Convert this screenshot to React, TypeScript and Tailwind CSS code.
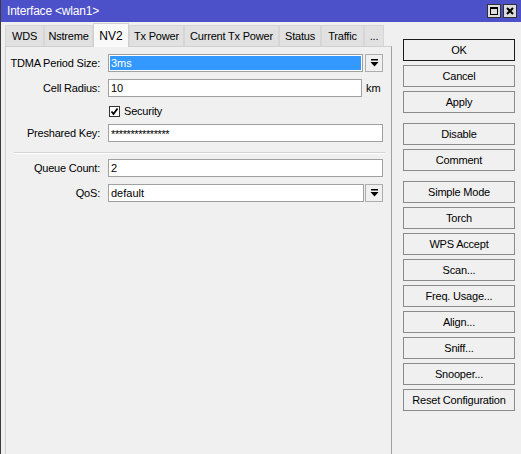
import React from "react";

const font = { fontFamily: '"Liberation Sans", Arial, sans-serif' };

function DropBtn() {
  return (
    <div className="w-[18px] h-[18px] border border-[#adadad] bg-[#f0f0f0] flex items-center justify-center shrink-0">
      <svg width="9" height="8" viewBox="0 0 9 8">
        <rect x="1" y="0" width="7" height="1.5" fill="#000" />
        <polygon points="0.5,3 8.5,3 4.5,7.5" fill="#000" />
      </svg>
    </div>
  );
}

function Label({ children }: { children: React.ReactNode }) {
  return (
    <div className="w-[95px] text-right pr-[1px] text-[11px] text-black shrink-0 tracking-[-0.2px]">{children}</div>
  );
}

function Input({ children, w }: { children?: React.ReactNode; w: string }) {
  return (
    <div className={`${w} h-[18px] border border-[#a0a0a0] bg-white flex items-center px-[2px] text-[11px] shrink-0`}>
      {children}
    </div>
  );
}

const tabs: { name: string; w: string; sel?: boolean }[] = [
  { name: "WDS", w: "w-[39px]" },
  { name: "Nstreme", w: "w-[49px]" },
  { name: "NV2", w: "w-[36px]", sel: true },
  { name: "Tx Power", w: "w-[55px]" },
  { name: "Current Tx Power", w: "w-[95px]" },
  { name: "Status", w: "w-[42px]" },
  { name: "Traffic", w: "w-[43px]" },
  { name: "...", w: "w-[20px]" },
];

const groups = [
  ["OK", "Cancel", "Apply"],
  ["Disable", "Comment"],
  ["Simple Mode", "Torch", "WPS Accept", "Scan...", "Freq. Usage...", "Align...", "Sniff...", "Snooper...", "Reset Configuration"],
];

export default function App() {
  return (
    <div style={font} className="w-[521px] h-[454px] bg-[#f0f0f0] flex flex-col overflow-hidden border-l border-[#3c3c3c] text-black">
      {/* Title bar */}
      <div className="h-[22px] bg-[#4c50c9] flex items-center justify-between shrink-0 pl-[6px] pr-[4px]">
        <span className="text-white text-[12px] tracking-[-0.2px]">Interface &lt;wlan1&gt;</span>
        <div className="flex gap-[2px] items-center">
          <div className="w-[14px] h-[14px] border border-[#303030] bg-[#dcdcdc] flex items-center justify-center">
            <div className="w-[8px] h-[8px] border border-black border-t-2" />
          </div>
          <div className="w-[14px] h-[14px] border border-[#303030] bg-[#dcdcdc] flex items-center justify-center">
            <svg width="8" height="8" viewBox="0 0 8 8">
              <path d="M1 1 L7 7 M7 1 L1 7" stroke="#000" strokeWidth="2" />
            </svg>
          </div>
        </div>
      </div>

      <div className="flex flex-1">
        {/* Left */}
        <div className="w-[391px] pl-[4px] flex flex-col shrink-0">
          <div className="flex items-end h-[24px] shrink-0">
            {tabs.map((t) =>
              t.sel ? (
                <div
                  key={t.name}
                  className={`${t.w} h-[24px] bg-[#f9f9f9] border border-b-0 border-[#d0d0d0] flex items-center justify-center text-[12px] -mb-px relative z-10`}
                >
                  {t.name}
                </div>
              ) : (
                <div
                  key={t.name}
                  className={`${t.w} h-[21px] bg-[#e1e1e1] border border-b-0 border-[#d6d6d6] flex items-center justify-center text-[11px] tracking-[-0.2px]`}
                >
                  {t.name}
                </div>
              )
            )}
          </div>
          <div className="flex-1 border-t border-l border-r border-[#cfcfcf] border-r-[#a0a0a0] pt-[7px] flex flex-col">
            <div className="flex items-center h-[18px]">
              <Label>TDMA Period Size:</Label>
              <div className="w-[7px]" />
              <div className="w-[255px] h-[18px] border border-[#a0a0a0] bg-white p-[1px] shrink-0">
                <div className="w-full h-full bg-[#3399ff] text-white text-[11px] flex items-center px-[1px]">3ms</div>
              </div>
              <div className="w-[2px]" />
              <DropBtn />
            </div>
            <div className="flex items-center h-[18px] mt-[7px]">
              <Label>Cell Radius:</Label>
              <div className="w-[7px]" />
              <Input w="w-[254px]">10</Input>
              <span className="text-[11px] ml-[4px]">km</span>
            </div>
            <div className="flex items-center h-[12px] mt-[8px]">
              <div className="w-[103px]" />
              <div className="w-[11px] h-[11px] border border-[#333] bg-white flex items-center justify-center">
                <svg width="9" height="9" viewBox="0 0 9 9">
                  <path d="M1.5 4.5 L3.5 7 L7.5 1.5" stroke="#000" strokeWidth="1.8" fill="none" />
                </svg>
              </div>
              <span className="text-[11px] ml-[4px] tracking-[-0.2px]">Security</span>
            </div>
            <div className="flex items-center h-[18px] mt-[7px]">
              <Label>Preshared Key:</Label>
              <div className="w-[7px]" />
              <Input w="w-[275px]">
                <span className="text-[11px] tracking-[-0.4px] leading-none pt-[3px]">***************</span>
              </Input>
            </div>
            <div className="ml-[8px] w-[371px] h-px bg-[#d4d4d4] mt-[10px] border-b border-white box-content" />
            <div className="flex items-center h-[18px] mt-[5px]">
              <Label>Queue Count:</Label>
              <div className="w-[7px]" />
              <Input w="w-[275px]">2</Input>
            </div>
            <div className="flex items-center h-[18px] mt-[7px]">
              <Label>QoS:</Label>
              <div className="w-[7px]" />
              <Input w="w-[256px]">default</Input>
              <div className="w-[1px]" />
              <DropBtn />
            </div>
          </div>
        </div>

        {/* Right buttons */}
        <div className="pl-[11px] pt-[17px] flex flex-col gap-[10px]">
          {groups.map((g, gi) => (
            <div key={gi} className="flex flex-col gap-[4px]">
              {g.map((b) => (
                <div
                  key={b}
                  className={`w-[112px] h-[22px] border ${b === "OK" ? "border-[#1a1a1a]" : "border-[#8a8a8a]"} bg-[#f0f0f0] flex items-center justify-center text-[11px] tracking-[-0.2px]`}
                >
                  {b}
                </div>
              ))}
            </div>
          ))}
        </div>
      </div>
    </div>
  );
}
